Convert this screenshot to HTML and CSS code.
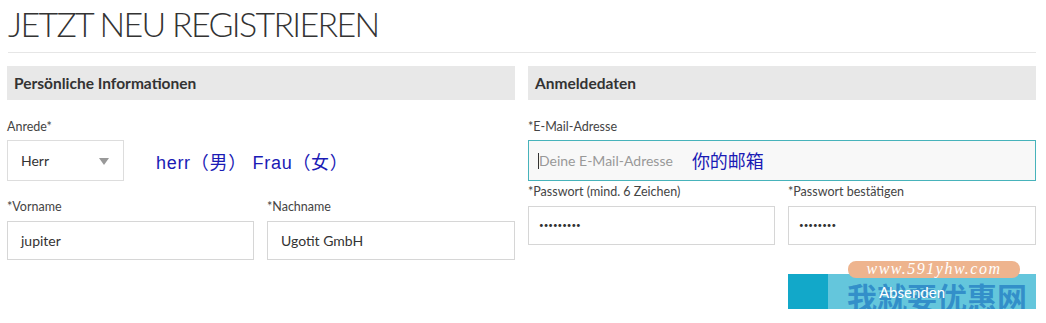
FILE: index.html
```html
<!DOCTYPE html>
<html lang="de">

<head>
    <meta charset="utf-8">
    <title>Registrieren</title>
    <link rel="stylesheet" href="styles.css">
</head>

<body>
    <h1 class="title">JETZT NEU REGISTRIEREN</h1>
    <div class="columns">
        <div class="column">
            <div class="section-head">Persönliche Informationen</div>
            <div class="field first">
                <label>Anrede*</label>
                <div class="row-note">
                    <div class="select">Herr<span class="arrow"></span></div>
                    <span class="note">herr（男） Frau（女）</span>
                </div>
            </div>
            <div class="pair">
                <div class="field">
                    <label>*Vorname</label>
                    <div class="box">jupiter</div>
                </div>
                <div class="field">
                    <label>*Nachname</label>
                    <div class="box">Ugotit GmbH</div>
                </div>
            </div>
        </div>
        <div class="column">
            <div class="section-head">Anmeldedaten</div>
            <div class="field first">
                <label>*E-Mail-Adresse</label>
                <div class="box focus">
                    <span class="caret"></span><span class="placeholder">Deine E-Mail-Adresse</span>
                    <span class="note cn">你的邮箱</span>
                </div>
            </div>
            <div class="pair tight">
                <div class="field">
                    <label>*Passwort (mind. 6 Zeichen)</label>
                    <div class="box dots">•••••••••</div>
                </div>
                <div class="field">
                    <label>*Passwort bestätigen</label>
                    <div class="box dots">••••••••</div>
                </div>
            </div>
            <div class="actions">
                <button class="send"><span>Absenden</span></button>
                <div class="mark">
                    <span class="pill">www.591yhw.com</span>
                    <span class="mark-cn">我就要优惠网</span>
                </div>
            </div>
        </div>
    </div>
</body>

</html>
```

FILE: styles.css
```css
body {
    margin: 0;
    padding: 0 10px 0 7px;
    background: #fff;
    font-family: Lato, "Open Sans", sans-serif;
    color: #333;
    overflow: hidden;
}

h1.title {
    margin: 0 0 0 1px;
    padding: 7px 0 11px;
    font-weight: 300;
    font-size: 34px;
    letter-spacing: -1.7px;
    line-height: 34px;
    color: #333;
    border-bottom: 1px solid #e6e6e6;
}

.columns {
    display: grid;
    grid-template-columns: 508px 508px;
    gap: 13px;
    margin-top: 13px;
}

.section-head {
    background: #e8e8e8;
    height: 34px;
    line-height: 34px;
    padding-left: 7px;
    font-weight: 700;
    font-size: 15.5px;
    color: #333;
}

.field label {
    display: block;
    font-size: 12.5px;
    color: #444;
    height: 14px;
    line-height: 14px;
    margin-bottom: 7px;
}

.field.first {
    margin-top: 20px;
}

.field.first label {
    margin-bottom: 6px;
}

.row-note {
    display: flex;
    align-items: center;
}

.select {
    width: 117px;
    height: 41px;
    box-sizing: border-box;
    border: 1px solid #ddd;
    padding-left: 13px;
    line-height: 39px;
    font-size: 14px;
    position: relative;
}

.arrow {
    position: absolute;
    left: 91px;
    top: 17px;
    border-left: 5px solid transparent;
    border-right: 5px solid transparent;
    border-top: 7px solid #999;
}

.note {
    margin-left: 32px;
    font-family: "Liberation Sans", "Noto Sans CJK SC", sans-serif;
    font-size: 18px;
    letter-spacing: 0.7px;
    color: #1b1bb5;
}

.pair {
    display: grid;
    grid-template-columns: 247px 248px;
    gap: 13px;
    margin-top: 19px;
}

.pair.tight {
    margin-top: 4px;
}

.box {
    height: 39px;
    box-sizing: border-box;
    border: 1px solid #d6d6d6;
    padding: 0 13px;
    font-size: 14px;
    line-height: 37px;
    color: #333;
    background: #fff;
}

.box.focus {
    height: 41px;
    border-color: #47b3bb;
    background: #f8f8f8;
    padding-left: 9px;
    display: flex;
    align-items: center;
}

.caret {
    width: 1px;
    height: 16px;
    background: #333;
}

.placeholder {
    color: #999;
    font-size: 14px;
}

.note.cn {
    margin-left: 19px;
    font-family: "Noto Sans CJK SC", sans-serif;
    font-size: 18px;
    letter-spacing: 0;
}

.dots {
    padding-left: 10px;
    font-size: 8px;
    letter-spacing: 0;
    color: #333;
}

.actions {
    display: flex;
    justify-content: flex-end;
    margin-top: 29px;
    position: relative;
}

.send {
    width: 248px;
    height: 35px;
    border: none;
    padding: 0;
    background: #12a8c9;
    color: #fff;
    font-family: Lato, "Open Sans", sans-serif;
    font-size: 15px;
}

.send span {
    position: relative;
    z-index: 2;
}

.mark {
    position: absolute;
    left: 300px;
    top: -13px;
    width: 208px;
    height: 50px;
    z-index: 1;
}

.mark::before {
    content: "";
    position: absolute;
    left: 0;
    top: 13px;
    width: 208px;
    height: 35px;
    background: rgba(255, 255, 255, 0.35);
}

.pill {
    position: absolute;
    left: 20px;
    top: 0;
    width: 172px;
    height: 17px;
    border-radius: 8px;
    background: #eeb48e;
    color: #fff;
    font-family: "Liberation Serif", serif;
    font-style: italic;
    font-size: 16px;
    letter-spacing: 1.5px;
    line-height: 16px;
    text-align: center;
}

.mark-cn {
    position: absolute;
    left: 19px;
    top: 17px;
    font-family: "Noto Sans CJK SC", sans-serif;
    font-weight: 700;
    font-size: 30px;
    line-height: 36px;
    color: rgba(35, 125, 195, 0.75);
}
```
